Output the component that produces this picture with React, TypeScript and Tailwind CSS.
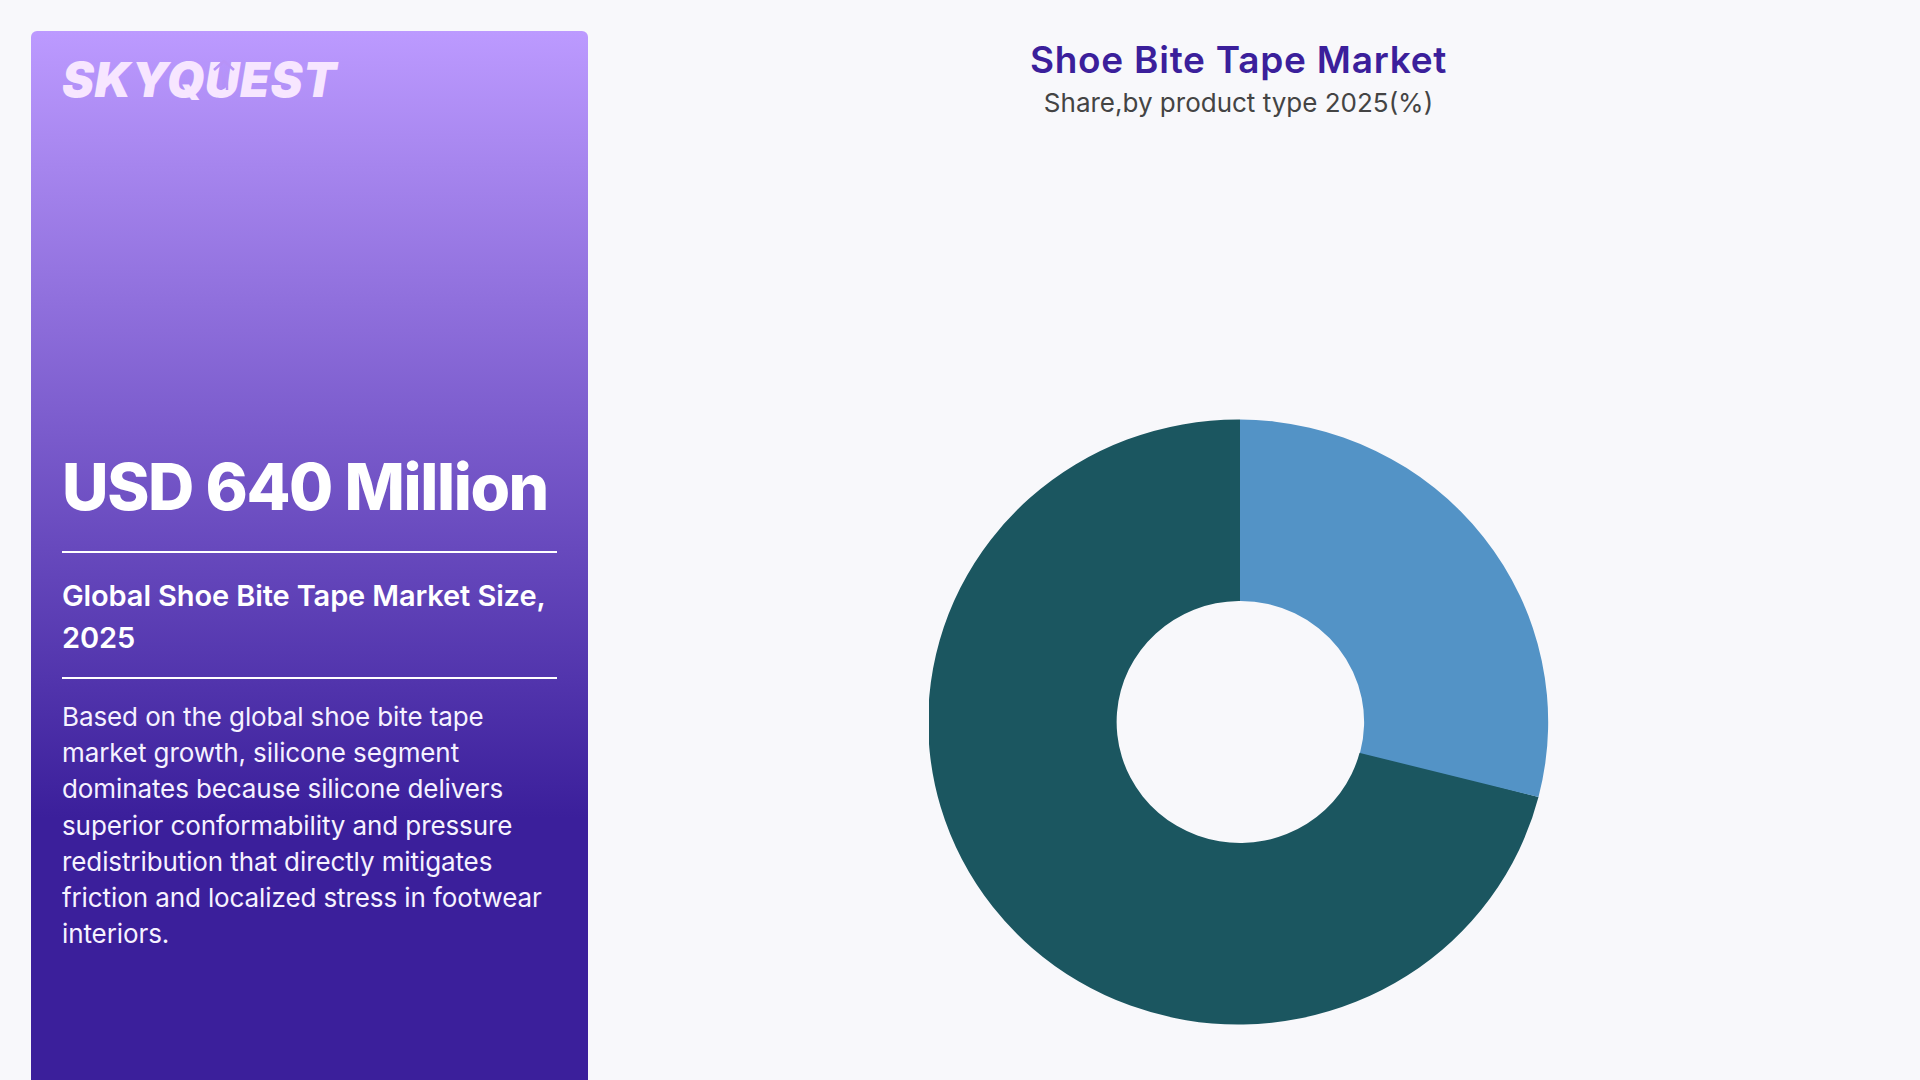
export default function App() {
  const lines = [
    "Based on the global shoe bite tape",
    "market growth, silicone segment",
    "dominates because silicone delivers",
    "superior conformability and pressure",
    "redistribution that directly mitigates",
    "friction and localized stress in footwear",
    "interiors.",
  ];
  return (
    <div className="flex h-[1080px] w-[1920px] overflow-hidden bg-[#f8f8fb] pl-[31px] pr-[31px] pt-[31px] font-['Inter',sans-serif]">
      <aside className="flex w-[557px] shrink-0 flex-col rounded-t-[6px] bg-[linear-gradient(180deg,#bc9aff_0%,#3b1f9b_75%,#3b1f9b_100%)] px-[31px] pt-[29px]">
        <div className="relative h-[39px] w-[278px]">
          <span className="block whitespace-nowrap text-[48px] font-black italic leading-[39px] tracking-[0.6px] text-[#f7e6ff]">
            SKYQUEST
          </span>
          <svg className="absolute left-[151px] top-0 h-[30px] w-[22px]" viewBox="0 0 22 30" aria-hidden="true">
            <path d="M1 10 L11 1 L21 10 M8 11 V30 M14 11 V30" fill="none" stroke="#b793f7" strokeWidth="2.5" />
          </svg>
        </div>
        <h1 className="mt-[349px] whitespace-nowrap text-[64px] font-extrabold leading-[78px] tracking-[-1.4px] text-white">
          USD 640 Million
        </h1>
        <div className="mt-[25px] h-[2px] bg-white" />
        <h2 className="mt-[22px] whitespace-nowrap text-[29px] font-semibold leading-[42px] tracking-[-0.12px] text-white">
          Global Shoe Bite Tape Market Size,
          <br />
          2025
        </h2>
        <div className="mt-[18px] h-[2px] bg-white" />
        <p className="mt-[20px] whitespace-nowrap text-[26px] font-normal leading-[36.2px] tracking-[-0.1px] text-[#f6f2ff]">
          {lines.map((l) => (
            <span key={l} className="block">
              {l}
            </span>
          ))}
        </p>
      </aside>
      <main className="flex flex-1 flex-col items-center">
        <h1 className="whitespace-nowrap pt-[6px] text-[37px] font-semibold leading-[46px] tracking-[0.75px] text-[#3b1f9b]">
          Shoe Bite Tape Market
        </h1>
        <p className="whitespace-nowrap text-[26px] font-normal leading-[40px] text-[#444444]">
          Share,by product type 2025(%)
        </p>
        <svg className="ml-[2px] mt-[296px] h-[606px] w-[621px]" viewBox="928.5 418 621 606" aria-label="Donut chart">
          <path
            fill="#1b5660"
            d="M1538 796 A310 302.5 0 1 1 1239.5 418.5 L1239.5 600 L1238 600 A123.5 121 0 1 0 1359 752 L1362 750 Z"
          />
          <path
            fill="#5393c6"
            d="M1239.5 418.5 A310 302.5 0 0 1 1538 796 L1359.5 752 A123.5 121 0 0 0 1239.5 600 Z"
          />
        </svg>
      </main>
    </div>
  );
}
